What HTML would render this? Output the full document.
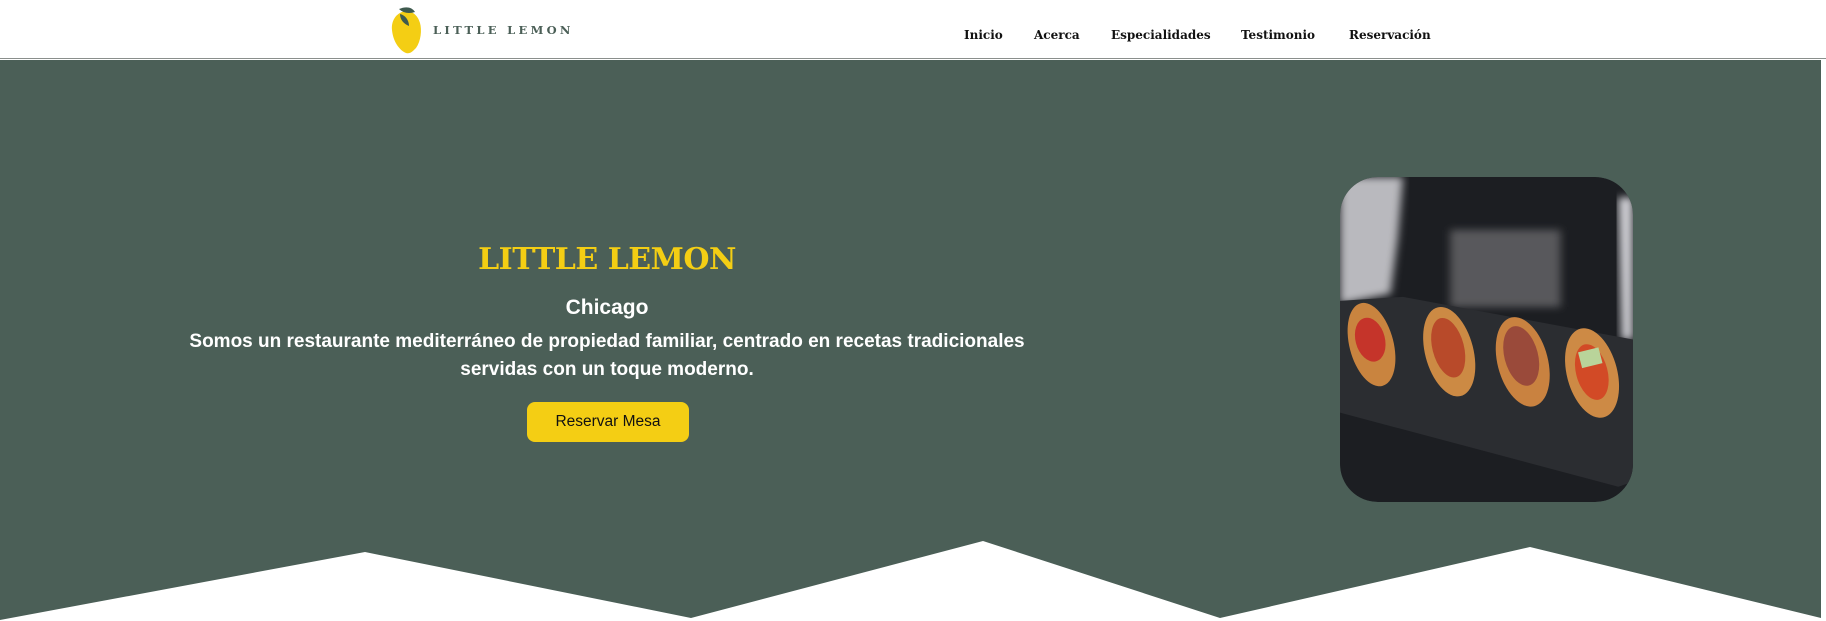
<!DOCTYPE html>
<html><head><meta charset="utf-8">
<style>
*{margin:0;padding:0;box-sizing:border-box}
html,body{width:1826px;height:621px;overflow:hidden;background:#fff;position:relative;font-family:"Liberation Sans",sans-serif}
.hdr{position:absolute;left:0;top:0;width:1826px;height:59px;background:#fff;border-bottom:1px solid #8a8f8c}
.logo-t{position:absolute;left:433px;top:23px;font-family:"DejaVu Serif","Liberation Serif",serif;font-weight:bold;font-size:11.5px;letter-spacing:3.3px;color:#4b5f57}
.nav a{position:absolute;top:28px;font-family:"DejaVu Serif","Liberation Serif",serif;font-weight:bold;font-size:12px;color:#111;text-decoration:none;white-space:nowrap}
.hero{position:absolute;left:0;top:60px;width:1821px;height:561px}
.c{position:absolute;left:7px;width:1200px;text-align:center;color:#fff;font-weight:bold}
</style></head><body>
<div class="hdr">
<svg style="position:absolute;left:390px;top:4px" width="34" height="52" viewBox="0 0 34 52">
<path d="M16 7 C7 8 1 16 2 26 C3 37 9 46 16 49 C20 50 22 48 26 44 C31 37 32 26 30 19 C28 12 23 7 16 7Z" fill="#f4ce14"/>
<path d="M9 5 C16 2 22 3 25 8 C19 10 13 9 9 5Z" fill="#3e5a4e"/>
<path d="M10 10 C10 16 14 20 19 22 C19 16 15 11 10 10Z" fill="#3e5a4e"/>
</svg>
<div class="logo-t">LITTLE LEMON</div>
<div class="nav">
<a style="left:964px">Inicio</a>
<a style="left:1034px">Acerca</a>
<a style="left:1111px">Especialidades</a>
<a style="left:1241px">Testimonio</a>
<a style="left:1349px">Reservación</a>
</div>
</div>
<svg class="hero" viewBox="0 60 1821 561" width="1821" height="561">
<polygon points="0,60 1821,60 1821,618 1530,547 1220,618 983,541 691,618 365,552 0,620" fill="#4b5f57"/>
</svg>
<div class="c" style="top:242px;font-family:'DejaVu Serif','Liberation Serif',serif;font-size:30px;color:#f4ce14;letter-spacing:-0.5px">LITTLE LEMON</div>
<div class="c" style="top:296px;font-size:21px">Chicago</div>
<div class="c" style="top:328px;font-size:19px;line-height:28px;left:177px;width:860px">Somos un restaurante mediterráneo de propiedad familiar, centrado en recetas tradicionales servidas con un toque moderno.</div>
<div style="position:absolute;left:527px;top:402px;width:162px;height:40px;background:#f4ce14;border-radius:8px;text-align:center;line-height:40px;font-size:15.5px;color:#111">Reservar Mesa</div>
<svg style="position:absolute;left:1340px;top:177px;border-radius:38px" width="293" height="325" viewBox="0 0 279 320" preserveAspectRatio="none">
<defs><clipPath id="r"><rect width="279" height="320" rx="36"/></clipPath>
<filter id="b"><feGaussianBlur stdDeviation="4"/></filter></defs>
<g clip-path="url(#r)">
<rect width="279" height="320" fill="#1c1e22"/>
<path d="M0 0 L60 0 L55 60 L48 115 L0 125Z" fill="#b9b9be" filter="url(#b)"/>
<path d="M265 20 L279 20 L279 160 L268 160Z" fill="#cfcfd4" filter="url(#b)"/>
<rect x="105" y="52" width="105" height="76" fill="#58595c" filter="url(#b)"/>
<polygon points="0,122 60,118 279,160 279,300 265,305 0,232" fill="#2b2d31"/>
<g transform="rotate(-14 30 165)"><ellipse cx="30" cy="165" rx="21" ry="42" fill="#c9843f"/><ellipse cx="30" cy="160" rx="14" ry="22" fill="#c5342a"/></g>
<g transform="rotate(-14 104 172)"><ellipse cx="104" cy="172" rx="23" ry="45" fill="#cc8a44"/><ellipse cx="104" cy="168" rx="15" ry="30" fill="#b84a2a"/></g>
<g transform="rotate(-14 174 182)"><ellipse cx="174" cy="182" rx="24" ry="45" fill="#c98240"/><ellipse cx="174" cy="176" rx="16" ry="30" fill="#9a4a3a"/></g>
<g transform="rotate(-14 240 193)"><ellipse cx="240" cy="193" rx="24" ry="45" fill="#cd8a45"/><ellipse cx="240" cy="192" rx="15" ry="28" fill="#d24a26"/><rect x="232" y="170" width="20" height="16" fill="#b9d49a"/></g>
</g>
</svg>
</body></html>
